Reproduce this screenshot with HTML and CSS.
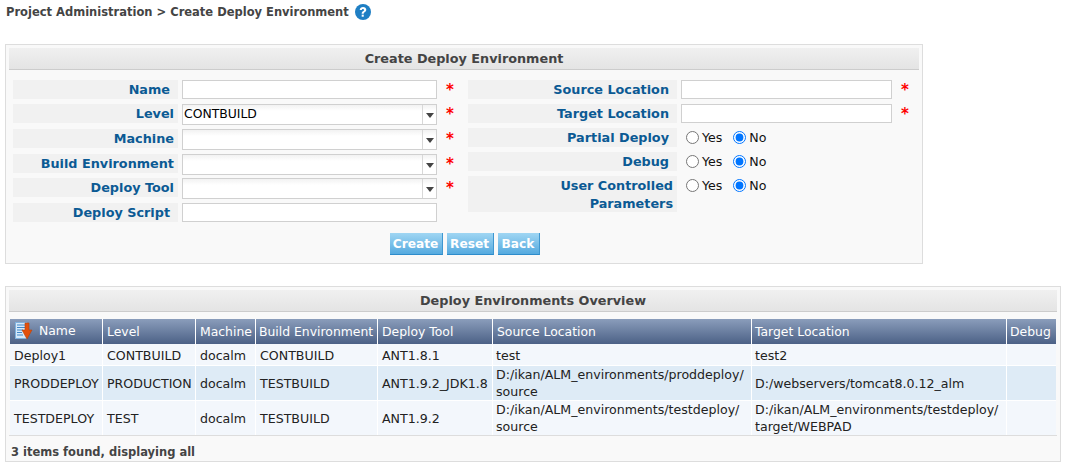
FILE: index.html
```html
<!DOCTYPE html>
<html lang="en">
<head>
<meta charset="utf-8">
<title>Create Deploy Environment</title>
<link rel="stylesheet" href="styles.css">
</head>
<body>
<div class="crumb"><span>Project Administration &gt; Create Deploy Environment</span>
<svg class="help" width="16" height="16" viewBox="0 0 17 17"><circle cx="8.5" cy="8.5" r="8.5" fill="#1f7fc4"/><path d="M5 6.400C5.100 4.300 6.700 3.300 8.600 3.300c2 0 3.400 1.200 3.400 2.900 0 1.300-.8 2-1.700 2.600-.8.500-1 .8-1 1.600H7.100c0-1.400.4-2.100 1.300-2.700.8-.5 1.200-.9 1.200-1.400 0-.7-.4-1.100-1.100-1.100-.8 0-1.200.5-1.300 1.200z" fill="#fff"/><rect x="7.100" y="11.300" width="2.200" height="2.200" fill="#fff"/></svg>
</div>

<section class="panel form-panel">
  <h2 class="title">Create Deploy Environment</h2>
  <form class="form-body">
    <div class="cols">
      <div class="col col-left">
        <div class="row row-first"><label class="lab">Name</label><input class="txt" type="text"><span class="req">*</span></div>
        <div class="row row-sel"><label class="lab lab-tight">Level</label><div class="sel"><select><option>CONTBUILD</option></select></div><span class="req">*</span></div>
        <div class="row row-sel"><label class="lab lab-tight">Machine</label><div class="sel"><select><option></option></select></div><span class="req">*</span></div>
        <div class="row row-sel"><label class="lab lab-tight">Build Environment</label><div class="sel"><select><option></option></select></div><span class="req">*</span></div>
        <div class="row row-sel"><label class="lab lab-tight">Deploy Tool</label><div class="sel"><select><option></option></select></div><span class="req">*</span></div>
        <div class="row"><label class="lab">Deploy Script</label><input class="txt" type="text"></div>
      </div>
      <div class="col col-right">
        <div class="row row-r"><label class="lab">Source Location</label><input class="txt" type="text"><span class="req">*</span></div>
        <div class="row row-r"><label class="lab">Target Location</label><input class="txt" type="text"><span class="req">*</span></div>
        <div class="row row-r"><label class="lab">Partial Deploy</label><div class="radios"><label><input type="radio" name="p">Yes</label><label><input type="radio" name="p" checked>No</label></div></div>
        <div class="row row-r"><label class="lab">Debug</label><div class="radios"><label><input type="radio" name="d">Yes</label><label><input type="radio" name="d" checked>No</label></div></div>
        <div class="row row-r"><label class="lab lab-tall">User Controlled Parameters</label><div class="radios"><label><input type="radio" name="u">Yes</label><label><input type="radio" name="u" checked>No</label></div></div>
      </div>
    </div>
    <div class="actions">
      <button type="button" class="btn">Create</button>
      <button type="button" class="btn">Reset</button>
      <button type="button" class="btn">Back</button>
    </div>
  </form>
</section>

<section class="panel list-panel">
  <h2 class="title">Deploy Environments Overview</h2>
  <table class="grid">
    <colgroup>
      <col class="c1"><col class="c2"><col class="c3"><col class="c4"><col class="c5"><col class="c6"><col class="c7"><col class="c8">
    </colgroup>
    <thead>
      <tr>
        <th class="th-name"><svg class="export" width="18" height="18" viewBox="0 0 18 18"><rect x=".5" y=".5" width="11" height="16" fill="#d6e9f9" stroke="#7fb2de"/><path d="M2 3h8M2 5.500h8M2 8h6M2 10.500h5M2 13h6" stroke="#3f87c8"/><path d="M10 1h4v7h3l-5 9-5-9h3z" fill="#e2500c" stroke="#b8430a" stroke-width=".6"/></svg>Name</th>
        <th>Level</th><th>Machine</th><th class="th-build">Build Environment</th><th>Deploy Tool</th><th>Source Location</th><th class="th-target">Target Location</th><th>Debug</th>
      </tr>
    </thead>
    <tbody>
      <tr class="r1"><td>Deploy1</td><td>CONTBUILD</td><td>docalm</td><td>CONTBUILD</td><td>ANT1.8.1</td><td class="loc">test</td><td class="loc">test2</td><td></td></tr>
      <tr class="r2"><td>PRODDEPLOY</td><td>PRODUCTION</td><td>docalm</td><td>TESTBUILD</td><td>ANT1.9.2_JDK1.8</td><td class="loc">D:/ikan/ALM_environments/proddeploy/<br>source</td><td class="loc">D:/webservers/tomcat8.0.12_alm</td><td></td></tr>
      <tr class="r3"><td>TESTDEPLOY</td><td>TEST</td><td>docalm</td><td>TESTBUILD</td><td>ANT1.9.2</td><td class="loc">D:/ikan/ALM_environments/testdeploy/<br>source</td><td class="loc">D:/ikan/ALM_environments/testdeploy/<br>target/WEBPAD</td><td></td></tr>
    </tbody>
  </table>
  <div class="found">3 items found, displaying all</div>
</section>
</body>
</html>
```

FILE: styles.css
```css
* { box-sizing: border-box; }
html, body { margin: 0; padding: 0; }
body {
  width: 1068px;
  height: 470px;
  overflow: hidden;
  background: #fff;
  font-family: "DejaVu Sans", Verdana, sans-serif;
  font-size: 12.600px;
  color: #222;
  padding: 0 0 0 5px;
}
.crumb {
  display: flex;
  align-items: center;
  gap: 6px;
  height: 24px;
  padding-left: 1px;
  font-size: 11.500px;
  font-weight: 700;
  color: #444;
}
.help { flex: none; }

.panel {
  background: #f9f9f9;
  border: 1px solid #ddd;
  padding: 3px;
}
.form-panel { width: 918px; height: 220px; margin-top: 20px; }
.list-panel { width: 1056px; height: 176px; margin-top: 22px; }
.title {
  margin: 0;
  height: 22px;
  line-height: 22px;
  text-align: center;
  font-size: 12.800px;
  font-weight: 700;
  color: #444;
  background: linear-gradient(#f0f0f0, #e4e4e4);
  border-bottom: 1px solid #ccc;
}

.form-body { padding: 10px 0 0 4px; }
.cols { display: flex; }
.col-left { width: 455px; }
.col-right { width: 450px; }

.row { display: flex; align-items: flex-start; height: 24.7px; }
.row-first { height: 24.400px; }
.row-r { height: 24px; }
.lab {
  flex: none;
  height: 19px;
  padding-right: 8px;
  line-height: 20px;
  text-align: right;
  font-size: 12.800px;
  font-weight: 700;
  color: #0b5a94;
  background: #f1f1f1;
}
.lab-tight { padding-right: 4px; }
.col-left .lab { width: 165px; margin-right: 4px; }
.col-right .lab { width: 209px; margin-right: 4px; }
.col-right .lab-tall { height: 36px; line-height: 18px; padding: 1px 4px 0 60px; }
.txt {
  height: 19px;
  margin: 0;
  padding: 0 2px;
  border: 1px solid #d0d0d0;
  background: #fff;
  font: inherit;
  outline: 0;
}
.col-left .txt, .sel { width: 255px; }
.col-right .txt { width: 211px; }
.req {
  margin-left: 9px;
  color: #f00;
  font-weight: 700;
  font-size: 15px;
  line-height: 20px;
}
.sel { position: relative; height: 21px; }
.sel select {
  appearance: none;
  display: block;
  width: 100%;
  height: 21px;
  margin: 0;
  padding: 0 0 2px 1px;
  border: 1px solid #d0d0d0;
  border-radius: 0;
  background: linear-gradient(#f2f2f2, #fff 6px);
  font-family: "DejaVu Sans", Verdana, sans-serif;
  font-size: 12.400px;
  color: #000;
}
.sel::before {
  content: "";
  position: absolute;
  top: 1px;
  bottom: 1px;
  right: 14px;
  width: 1px;
  background: #d8d8d8;
}
.sel::after {
  content: "";
  position: absolute;
  top: 9px;
  right: 3px;
  border: 4px solid transparent;
  border-top: 5px solid #444;
  border-bottom: 0;
}
.radios { display: flex; gap: 11px; padding-left: 5px; height: 19px; align-items: center; color: #111; }
.radios label { display: flex; align-items: center; gap: 3px; }
.radios input { width: 13px; height: 13px; margin: 0; }

.actions { display: flex; justify-content: center; gap: 4px; margin-top: 5px; width: 903px; }
.btn {
  height: 22px;
  padding: 1px 0 0;
  border: 0;
  border-right: 1px solid #3f97d0;
  border-bottom: 1px solid #2d8ccb;
  background: linear-gradient(#a0d6f3, #55aadf);
  color: #fff;
  font: 700 12.200px "DejaVu Sans", Verdana, sans-serif;
}
.btn:nth-child(1) { width: 53px; }
.btn:nth-child(2) { width: 47px; }
.btn:nth-child(3) { width: 42px; }

.grid {
  table-layout: fixed;
  border-collapse: separate;
  border-spacing: 0;
  width: 1046px;
  margin: 7px 0 0 1px;
}
.c1 { width: 93px; } .c2 { width: 93px; } .c3 { width: 60px; } .c4 { width: 122px; }
.c5 { width: 115px; } .c6 { width: 259px; } .c7 { width: 255px; } .c8 { width: 49px; }
.grid th {
  height: 25px;
  padding: 0 4px 1px;
  text-align: left;
  font-size: 12.400px;
  font-weight: 400;
  white-space: nowrap;
  color: #fff;
  background: linear-gradient(#8a9dbb, #4c6186);
  border-right: 1px solid #fff;
}
.grid .th-build { padding-left: 3px; }
.grid .th-target { padding-left: 3px; }
.grid th:last-child { border-right: 0; padding-left: 3px; }
.grid .th-name { padding-left: 5px; }
.export { vertical-align: middle; margin-right: 6px; }
.grid td {
  padding: 0 4px;
  line-height: 17px;
  color: #222;
  white-space: nowrap;
  border-right: 1px solid #fff;
  border-bottom: 1px solid #fff;
}
.grid td:last-child { border-right: 0; }
.grid .loc { padding-left: 3px; }
.r1 td { height: 22px; background: #f3f7fc; padding-top: 1px; }
.r2 td { height: 35px; background: #deebf6; }
.r3 td { height: 34px; background: #f3f7fc; border-bottom: 0; }
.found {
  margin-top: 0;
  border-top: 1px solid #ddd;
  padding: 9px 2px 0;
  font-size: 11.500px;
  font-weight: 700;
  color: #444;
}
```
